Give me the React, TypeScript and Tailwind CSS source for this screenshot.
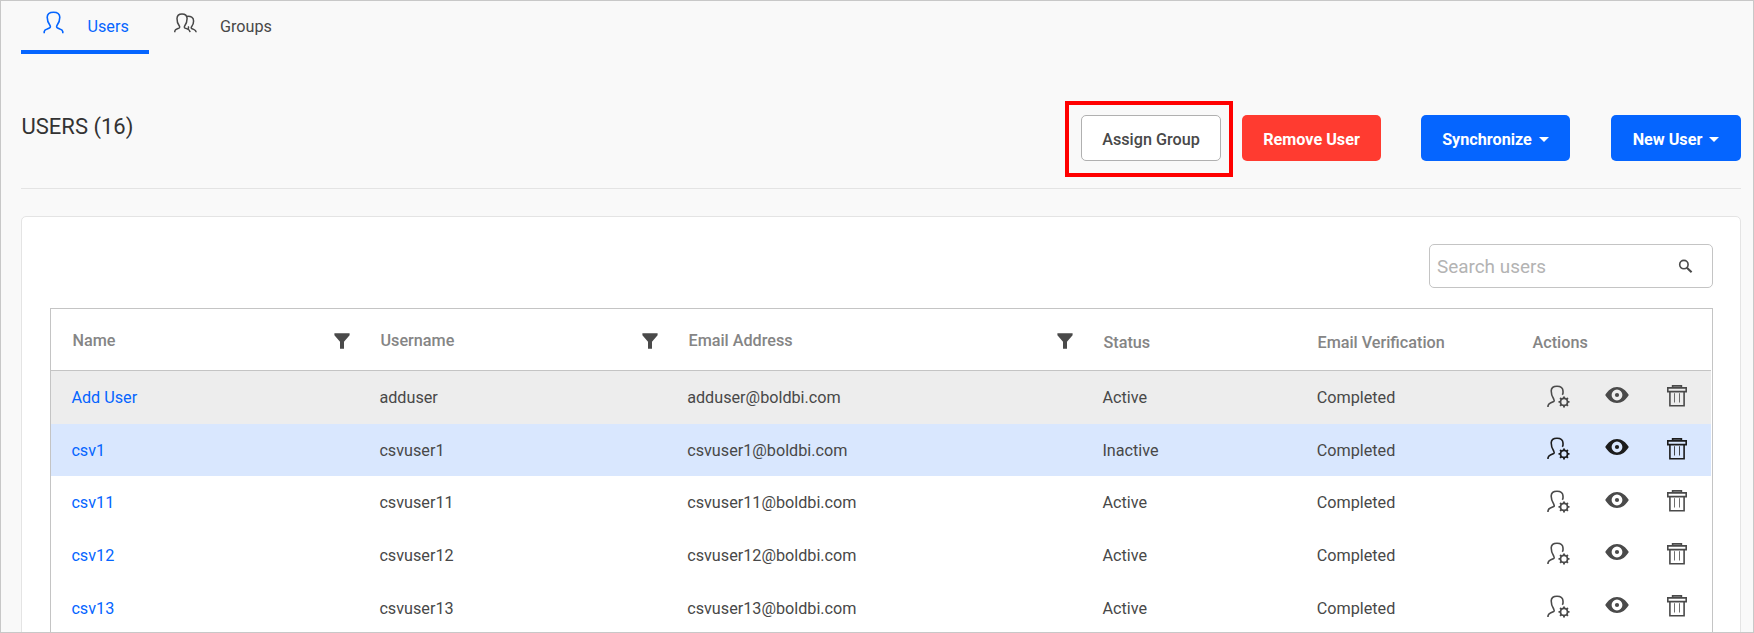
import React from "react";

type User = { name: string; username: string; status: string; tone: string; icons: string };

const users: User[] = [
  { name: "Add User", username: "adduser", status: "Active", tone: "bg-[#ededed]", icons: "text-[#4a4a4a]" },
  { name: "csv1", username: "csvuser1", status: "Inactive", tone: "bg-[#d9e7fe]", icons: "text-[#1c1c1c]" },
  { name: "csv11", username: "csvuser11", status: "Active", tone: "bg-white", icons: "text-[#4a4a4a]" },
  { name: "csv12", username: "csvuser12", status: "Active", tone: "bg-white", icons: "text-[#4a4a4a]" },
  { name: "csv13", username: "csvuser13", status: "Active", tone: "bg-white", icons: "text-[#4a4a4a]" },
];

const columns = "grid grid-cols-[308px_308px_415px_214px_215px_1fr]";

function PersonIcon() {
  return (
    <svg className="h-[23px] w-[21px]" viewBox="0 0 21 23" fill="none" stroke="currentColor" strokeWidth="1.6">
      <path d="M1.2 22.2V20.6C1.4 19.3 2.6 18.4 4.2 17.9L6.4 17C7.6 16.5 7.6 15.4 6.9 14.2C5.2 12 4.2 9 4.2 6.2C4.3 2.7 6.6 1.2 10.5 1.2C14.4 1.2 16.7 2.7 16.8 6.2C16.8 9 15.8 12 14.1 14.2C13.4 15.4 13.4 16.5 14.6 17L16.8 17.9C18.4 18.4 19.6 19.3 19.8 20.6V22.2" />
    </svg>
  );
}

function PeopleIcon() {
  return (
    <svg className="h-5 w-[23px]" viewBox="0 0 23 20" fill="none" stroke="currentColor" strokeWidth="1.5">
      <path d="M.8 19.2V18C1 16.8 2.1 16.2 3.4 15.7L5 15.1C5.9 14.6 5.8 13.7 5.2 12.7C3.8 10.8 2.9 8.4 3 5.5C3.1 2.3 5 .9 8 .9C11.1 .9 13 2.3 13.1 5.5C13.1 8.4 12.2 10.8 10.8 12.7C10.2 13.7 10.2 14.6 11.1 15.1L13.2 15.9C14.8 16.5 15.9 17.3 16.1 19.2" />
      <path d="M12.5 3.4C16.9 2.9 19.6 4.3 19.6 8C19.6 10.2 18.8 12.2 17.6 13.7C17 14.8 17 15.3 18 15.8L19.7 16.4C21.2 17 22.1 17.6 22.2 19.2M14.2 13.4C14.8 14.4 14.6 15.4 13.7 15.9" />
    </svg>
  );
}

function UserGearIcon() {
  return (
    <svg className="h-[23px] w-[23px]" viewBox="0 0 23 23" fill="none" stroke="currentColor">
      <path strokeWidth="1.6" d="M1 22V20.8C1.2 19.3 2 18.7 3.4 18.1L6.7 16.6C7.5 16.1 7.3 15.2 6.8 14.3C4.9 11.4 4.1 9 4.2 5.9C4.3 2.3 6.4 1.2 10 1.2C13.6 1.2 15.9 2.4 16 6V8.2C15.9 8.8 15.6 9.3 15.3 9.7" />
      <circle cx="17" cy="16.9" r="3.5" strokeWidth="1.8" />
      <path
        strokeWidth="1.9"
        d="M17 13.2V11.4M17 20.6V22.4M13.3 16.9H11.5M20.7 16.9H22.5M14.4 14.3L13.1 13M19.6 14.3L20.9 13M14.4 19.5L13.1 20.8M19.6 19.5L20.9 20.8"
      />
    </svg>
  );
}

function EyeIcon() {
  return (
    <svg className="h-4 w-6" viewBox="0 0 24 16" fill="currentColor">
      <path
        fillRule="evenodd"
        d="M.2 8C3.2 3 7.2 0 12 0S20.8 3 23.8 8C20.8 13 16.8 16 12 16S3.2 13 .2 8ZM12 2.6A5.4 5.4 0 1 0 12 13.4A5.4 5.4 0 1 0 12 2.6Z"
      />
      <circle cx="12" cy="8" r="2.1" />
    </svg>
  );
}

function TrashIcon() {
  return (
    <svg className="h-[22px] w-5" viewBox="0 0 20 22" fill="none" stroke="currentColor">
      <path strokeWidth="1.6" d="M5.6 2.6V.9H14.4V2.6M.8 2.9H19.2V6.6H.8ZM2.9 6.6V20.8H17.1V6.6" />
      <path strokeWidth="1" strokeOpacity=".8" d="M7.5 8.2V17.5M12.5 8.2V17.5" />
    </svg>
  );
}

function FilterIcon() {
  return (
    <svg className="h-4 w-4 text-[#4a4a4a]" viewBox="0 0 16 16" fill="currentColor">
      <path d="M.4 .3H15.6V2.2L10 8.8V15.7H6V8.8L.4 2.2Z" />
    </svg>
  );
}

function Caret() {
  return (
    <svg className="h-[5px] w-2.5" viewBox="0 0 10 5" fill="currentColor">
      <path d="M0 0H10L5 5Z" />
    </svg>
  );
}

function HeaderCell({ label, filter, low }: { label: string; filter?: boolean; low?: boolean }) {
  return (
    <div className={`flex items-center justify-between pl-[21.5px] pr-[9px] ${low ? "pt-1.5" : "pt-0.5"}`}>
      <span>{label}</span>
      {filter && <FilterIcon />}
    </div>
  );
}

function UserRow({ user }: { user: User }) {
  return (
    <div className={`${columns} mr-px h-[52.6px] shrink-0 items-center ${user.tone}`}>
      <a className="pl-[20.4px] pt-[2px] text-[#0565ff]">{user.name}</a>
      <span className="pl-[20.4px] pt-[2px]">{user.username}</span>
      <span className="pl-[20.2px] pt-[2px]">{user.username}@boldbi.com</span>
      <span className="pl-[20.4px] pt-[2px]">{user.status}</span>
      <span className="pl-[20.7px] pt-[2px]">Completed</span>
      <div className={`flex items-center pl-[36px] pb-[2.5px] ${user.icons}`}>
        <UserGearIcon />
        <span className="ml-[35px] mb-[3px]"><EyeIcon /></span>
        <span className="ml-[38px]"><TrashIcon /></span>
      </div>
    </div>
  );
}

export default function App() {
  return (
    <div className="flex h-[633px] w-[1754px] flex-col overflow-hidden border border-[#c8c8c8] bg-[#f9f9f9] pl-5 pr-3 font-[Roboto,sans-serif] text-[16.2px] leading-6 text-[#484848] [&_svg]:block">
      <nav className="flex h-[53px] shrink-0">
        <a className="flex w-32 border-b-4 border-[#0565ff] pl-[22px] text-[#0565ff]">
          <span className="mt-[10px]"><PersonIcon /></span>
          <span className="ml-[23.5px] mt-[14px]">Users</span>
        </a>
        <a className="flex pl-[24.5px]">
          <span className="mt-[12px]"><PeopleIcon /></span>
          <span className="ml-[23.5px] mt-[14px]">Groups</span>
        </a>
      </nav>

      <header className="flex h-[135px] shrink-0 border-b border-[#e4e4e4]">
        <h1 className="mt-[59px] pl-[0.5px] text-[22px] leading-7 text-[#333]">USERS (16)</h1>
        <div className="ml-auto mt-[47px] flex items-start">
          <div className="border-4 border-[#ff0000] pb-3 pl-3 pr-2 pt-2.5">
            <button className="block h-[46px] w-[140px] rounded-[5px] border border-[#b0b0b0] bg-white pt-[3px] font-medium">Assign Group</button>
          </div>
          <button className="ml-[9px] mt-3.5 h-[46px] w-[139px] rounded-[5px] bg-[#ff3b30] pt-[3px] font-bold text-white">Remove User</button>
          <button className="ml-10 mt-3.5 flex h-[46px] w-[149px] items-center justify-center gap-[7px] rounded-[5px] bg-[#0565ff] pt-[3px] font-bold text-white">
            Synchronize <Caret />
          </button>
          <button className="ml-[41px] mt-3.5 flex h-[46px] w-[130px] items-center justify-center gap-[7px] rounded-[5px] bg-[#0565ff] pt-[3px] font-bold text-white">
            New User <Caret />
          </button>
        </div>
      </header>

      <main className="mt-[27px] flex h-[460px] shrink-0 flex-col rounded-[5px] border border-[#e4e4e4] bg-white pl-7 pr-[27px]">
        <label className="ml-auto mt-[27px] flex h-11 w-[284px] shrink-0 items-center justify-between rounded-[5px] border border-[#c4c4c4] pl-[7px] pr-[19px] text-[18.9px] text-[#b3b3b3]">
          <span className="pt-px">Search users</span>
          <svg className="h-[15px] w-[15px] text-[#4a4a4a]" viewBox="0 0 15 15" fill="none" stroke="currentColor">
            <circle cx="5.9" cy="5.6" r="4.2" strokeWidth="1.6" />
            <path strokeWidth="2.1" d="M8.9 8.7L13.6 13.3" />
          </svg>
        </label>
        <section className="mt-5 flex grow flex-col border border-b-0 border-[#c4c4c4]">
          <div className={`${columns} mr-px h-[62px] shrink-0 border-b border-[#c4c4c4] font-medium text-[#858585]`}>
            <HeaderCell label="Name" filter />
            <HeaderCell label="Username" filter />
            <HeaderCell label="Email Address" filter />
            <HeaderCell label="Status" low />
            <HeaderCell label="Email Verification" low />
            <HeaderCell label="Actions" low />
          </div>
          {users.map((user) => (
            <UserRow key={user.name} user={user} />
          ))}
        </section>
      </main>
    </div>
  );
}
